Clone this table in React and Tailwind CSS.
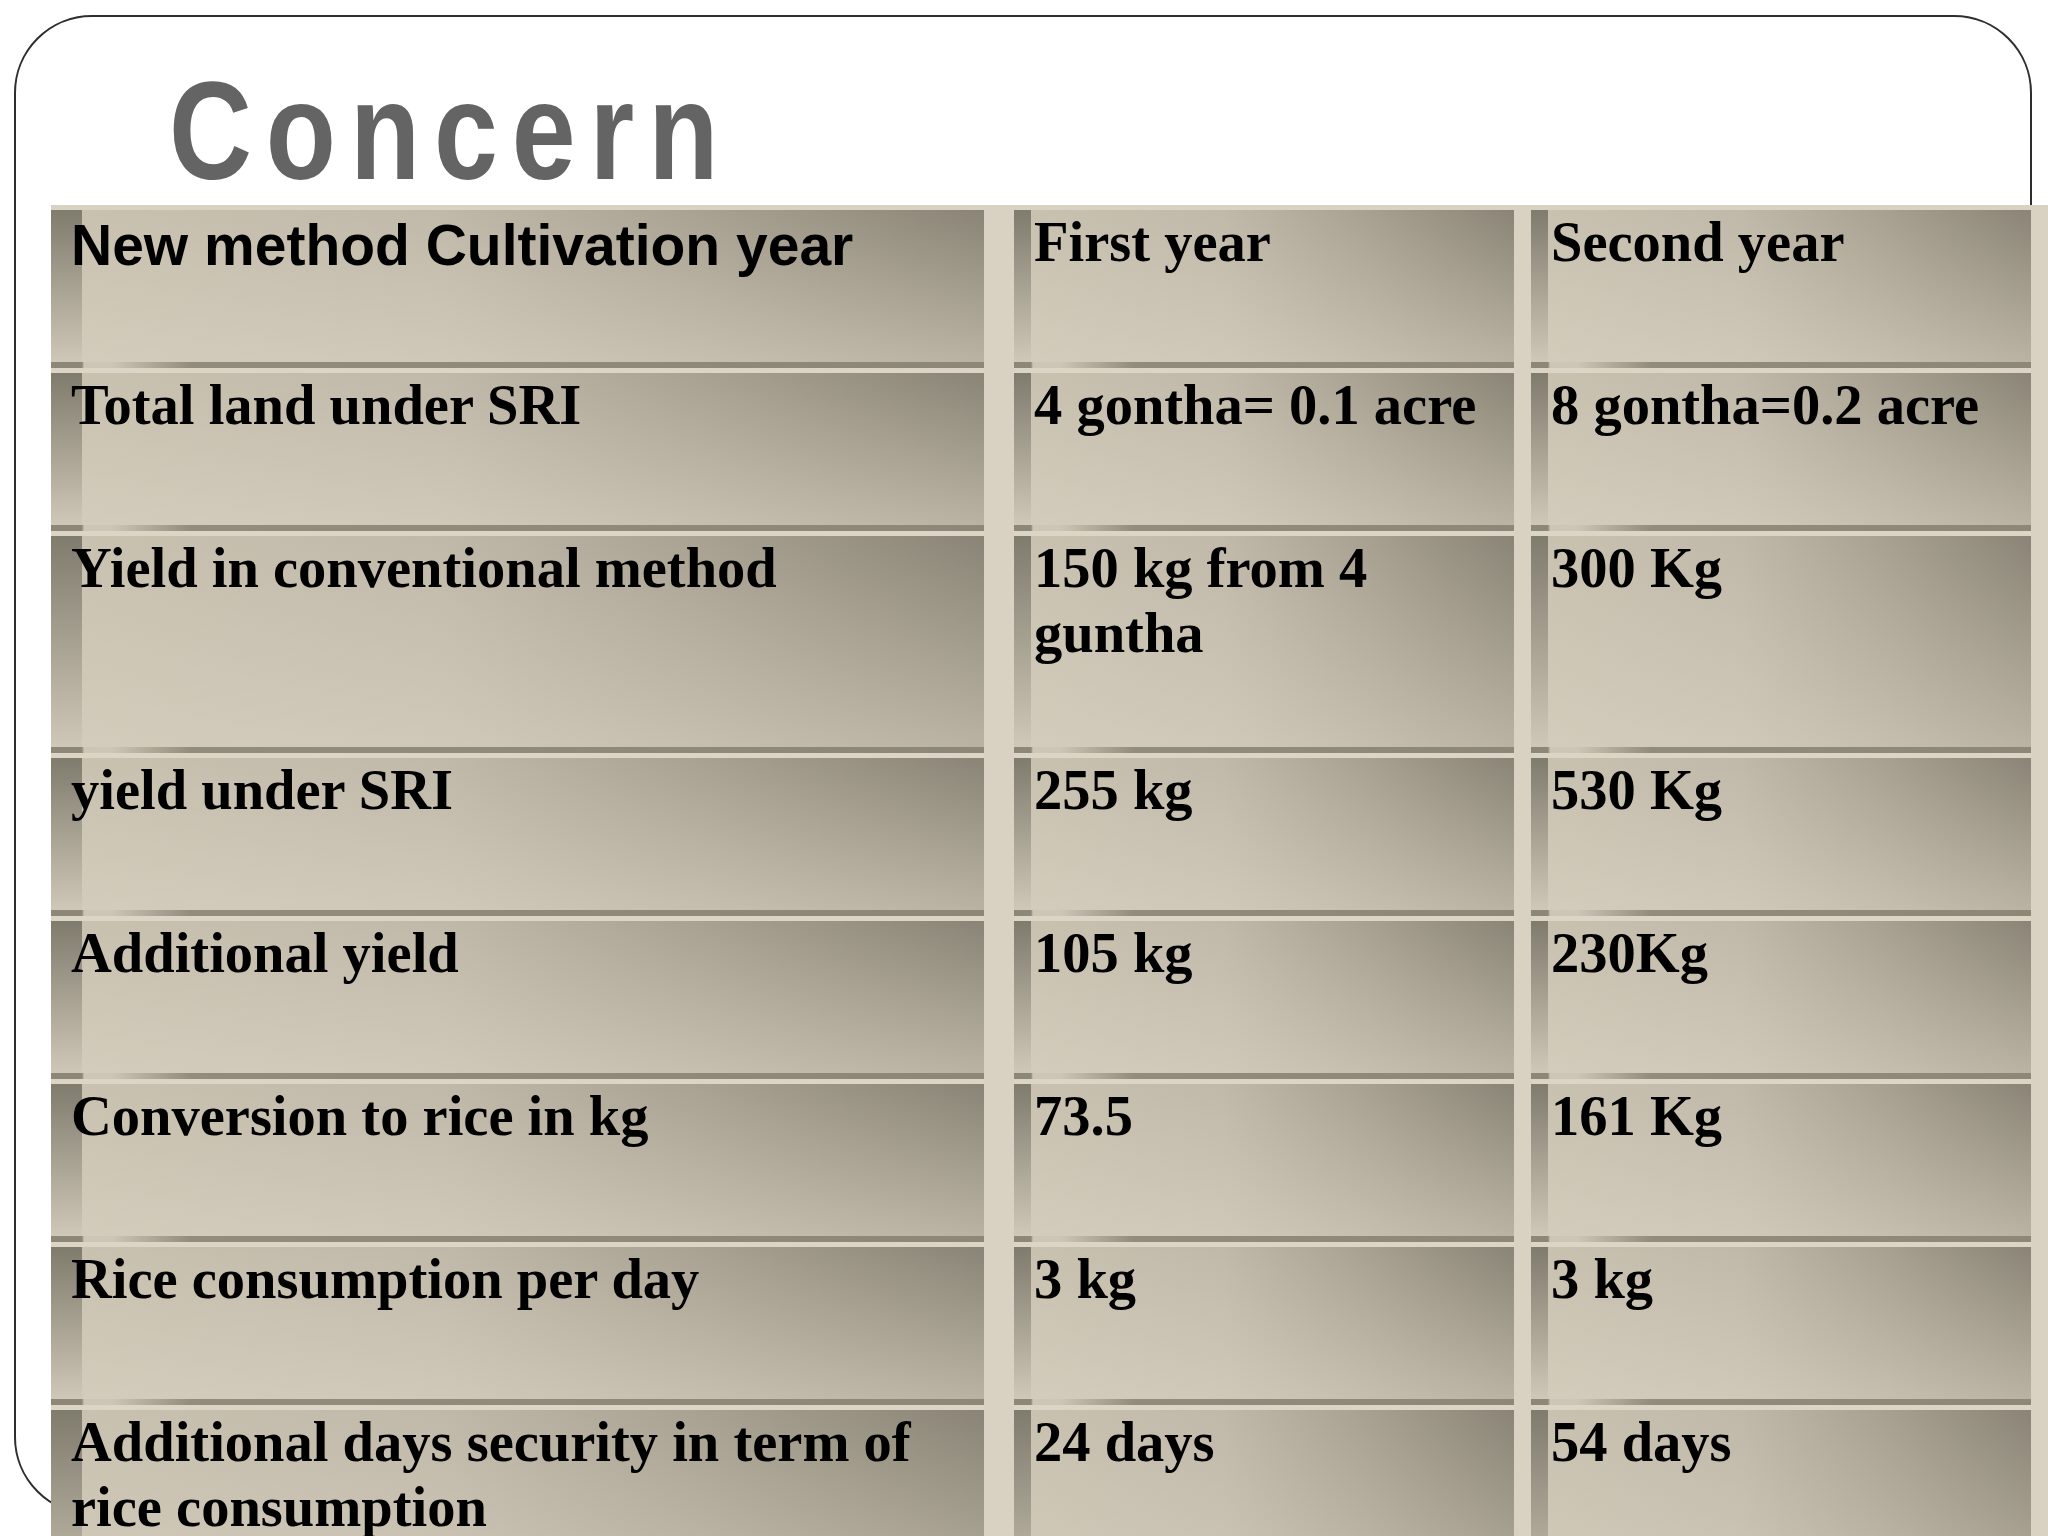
const BODY_WIDE =
  "[background-image:linear-gradient(to_bottom,#7f7b6d,#cfc7b7),linear-gradient(to_bottom,rgba(218,210,194,0),rgba(218,210,194,0.6)),linear-gradient(to_right,#cac2b1,#c0b8a8_42%,#a8a192_70%,#898475)] [background-size:31px_100%,100%_100%,100%_100%] bg-no-repeat";
const BODY_NARROW =
  "[background-image:linear-gradient(to_bottom,#7f7b6d,#cfc7b7),linear-gradient(to_bottom,rgba(218,210,194,0),rgba(218,210,194,0.6)),linear-gradient(to_right,#cac2b1,#c0b8a8_42%,#a8a192_70%,#898475)] [background-size:17px_100%,100%_100%,100%_100%] bg-no-repeat";
const BAND_WIDE =
  "h-[6px] bg-[linear-gradient(to_right,#8d8778_31px,#cdc5b5_33px,#cdc5b5_60px,#928c7d_140px,#8d8778)]";
const BAND_NARROW =
  "h-[6px] bg-[linear-gradient(to_right,#8d8778_17px,#cdc5b5_19px,#cdc5b5_46px,#928c7d_120px,#8d8778)]";

const rows = [
  { cells: ['New method Cultivation year', 'First year', 'Second year'], h: 'h-[152px]', header: true },
  { cells: ['Total land under SRI', '4 gontha= 0.1 acre', '8 gontha=0.2 acre'], h: 'h-[152px]' },
  { cells: ['Yield in conventional method', '150 kg from 4 guntha', '300 Kg'], h: 'h-[211px]' },
  { cells: ['yield under SRI', '255 kg', '530 Kg'], h: 'h-[152px]' },
  { cells: ['Additional yield', '105 kg', '230Kg'], h: 'h-[152px]' },
  { cells: ['Conversion to rice in kg', '73.5', '161 Kg'], h: 'h-[152px]' },
  { cells: ['Rice consumption per day', '3 kg', '3 kg'], h: 'h-[152px]' },
  { cells: ['Additional days security in term of rice consumption', '24 days', '54 days'], h: 'h-[210px]' },
];

function Cell({ text, wide, first, h, sans, className = '' }) {
  return (
    <div className={`flex flex-col ${wide ? 'w-[933px]' : 'w-[500px]'} ${className}`}>
      {!first && <div className={wide ? BAND_WIDE : BAND_NARROW} />}
      {!first && <div className="h-[5px] bg-[#dcd4c4]" />}
      <div
        className={`${h} ${wide ? BODY_WIDE : BODY_NARROW} pl-[20px] pr-[10px] text-black leading-[65px] ${
          sans
            ? "pt-[3px] font-['Liberation_Sans',Arial,sans-serif] text-[57px] font-bold"
            : "font-['Liberation_Serif','Times_New_Roman',serif] text-[56.5px] font-bold"
        }`}
      >
        {text}
      </div>
    </div>
  );
}

export default function App() {
  return (
    <div className="relative h-[1536px] w-[2048px] overflow-hidden bg-white">
      <div className="ml-[14px] mt-[15px] h-[1500px] w-[2018px] rounded-[78px] border-2 border-[#2e2e2e]">
        {/* Slide title */}
        <div className="pl-[153px] pt-[40px] font-['Liberation_Sans',Arial,sans-serif] text-[140px] font-bold leading-[147px] text-[#646464]">
          <span className="inline-block origin-left scale-x-[0.82] tracking-[17px]">Concern</span>
        </div>

        {/* Table */}
        <div className="ml-[35px] mt-[1px] w-[1997px] bg-[#d9d1c1] pt-[5px]">
          {rows.map((row, i) => (
            <div key={i} className="flex">
              <Cell text={row.cells[0]} wide first={i === 0} h={row.h} sans={row.header} />
              <Cell text={row.cells[1]} first={i === 0} h={row.h} className="ml-[30px]" />
              <Cell text={row.cells[2]} first={i === 0} h={row.h} className="ml-[17px]" />
            </div>
          ))}
        </div>
      </div>
    </div>
  );
}
